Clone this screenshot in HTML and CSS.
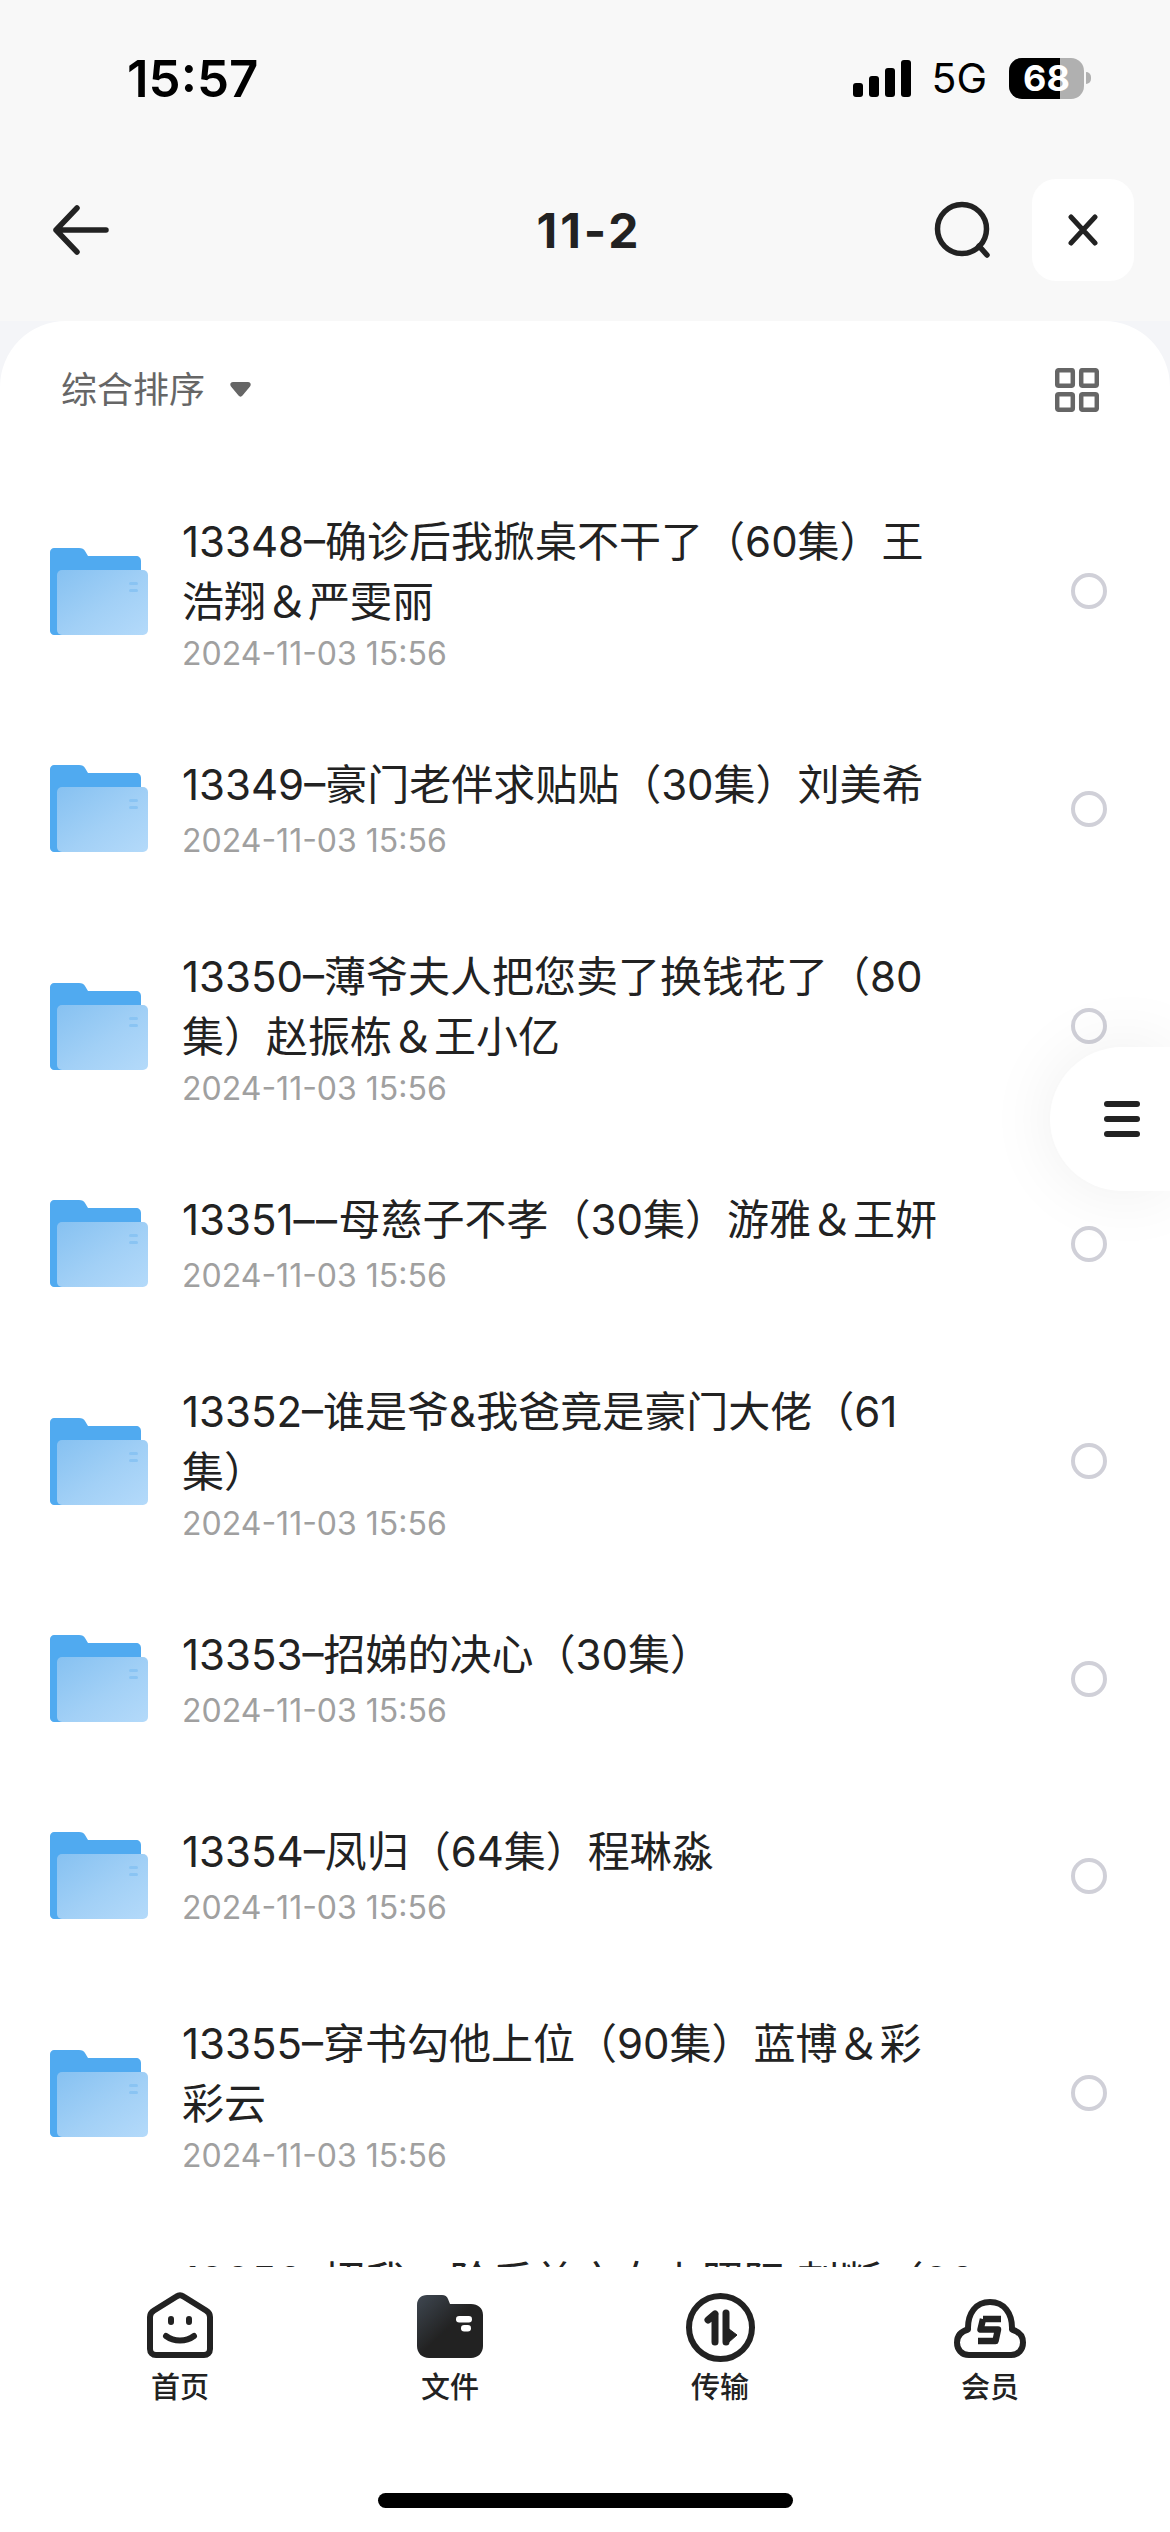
FILE: index.html
```html
<!DOCTYPE html>
<html lang="zh-CN">
<head>
    <meta charset="UTF-8">
    <meta name="viewport" content="width=device-width, initial-scale=1.0">
    <title>11-2</title>
    <link rel="stylesheet" href="styles.css">
</head>
<body>
    <svg class="defs" width="0" height="0">
        <defs>
            <linearGradient id="folderFront" x1="0" y1="0" x2="1" y2="1">
                <stop offset="0" stop-color="#86c1f1"/>
                <stop offset="0.55" stop-color="#a2d0f6"/>
                <stop offset="1" stop-color="#b4dafa"/>
            </linearGradient>
            <linearGradient id="tabFolder" x1="0" y1="0" x2="1" y2="1">
                <stop offset="0" stop-color="#3f4852"/>
                <stop offset="0.5" stop-color="#222222"/>
                <stop offset="1" stop-color="#222222"/>
            </linearGradient>
            <symbol id="folder" viewBox="0 0 98 87">
                <path d="M4 0H29C32 0 34 1 35 3L38 8H86C89 8 91 10 91 13V87H4C2 87 0 85 0 83V4C0 2 2 0 4 0Z" fill="#50aaf0"/>
                <rect x="7" y="22" width="91" height="65" rx="5" fill="url(#folderFront)"/>
                <rect x="79" y="34" width="9" height="3" rx="1.5" fill="#8ac4f3"/>
                <rect x="79" y="41" width="9" height="3" rx="1.5" fill="#8ac4f3"/>
            </symbol>
        </defs>
    </svg>

    <div class="page">
        <header class="top">
            <div class="status-bar">
                <span class="clock">15:57</span>
                <div class="status-right">
                    <svg class="signal" width="58" height="37" viewBox="0 0 58 37">
                        <rect x="0" y="23" width="10" height="14" rx="3"/>
                        <rect x="16" y="16" width="10" height="21" rx="3"/>
                        <rect x="32" y="8" width="10" height="29" rx="3"/>
                        <rect x="48" y="0" width="10" height="37" rx="3"/>
                    </svg>
                    <span class="network">5G</span>
                    <div class="battery">
                        <div class="battery-body"><span class="battery-level"></span><span class="battery-text">68</span></div>
                        <span class="battery-nub"></span>
                    </div>
                </div>
            </div>
            <div class="nav">
                <svg class="back" width="56" height="50" viewBox="0 0 56 50" fill="none" stroke="#222" stroke-width="5.5" stroke-linecap="round" stroke-linejoin="round">
                    <path d="M24 3L3 25L24 47M3 25H53"/>
                </svg>
                <div class="nav-title">11-2</div>
                <svg class="search" width="58" height="58" viewBox="0 0 58 58" fill="none" stroke="#222" stroke-width="5.5" stroke-linecap="round">
                    <circle cx="28" cy="28" r="24.5"/>
                    <path d="M45 45L53 54"/>
                </svg>
                <button class="close">
                    <svg width="30" height="32" viewBox="0 0 30 32" fill="none" stroke="#222" stroke-width="5" stroke-linecap="round">
                        <path d="M3 3L27 29M27 3L3 29"/>
                    </svg>
                </button>
            </div>
        </header>

        <main class="sheet">
            <div class="sort-bar">
                <div class="sort">
                    <span>综合排序</span>
                    <svg width="21" height="15" viewBox="0 0 21 15"><path d="M3 0H18C20.500 0 21.500 2.500 20 4.500L12.500 13.500C11.500 15 9.500 15 8.500 13.500L1 4.500C-.5 2.500 .5 0 3 0Z" fill="#666"/></svg>
                </div>
                <svg class="grid-icon" width="44" height="44" viewBox="0 0 44 44" fill="none" stroke="#666" stroke-width="4.500">
                    <rect x="2.200" y="2.200" width="15.600" height="15.600" rx="1.500"/>
                    <rect x="26.200" y="2.200" width="15.600" height="15.600" rx="1.500"/>
                    <rect x="2.200" y="26.200" width="15.600" height="15.600" rx="1.500"/>
                    <rect x="26.200" y="26.200" width="15.600" height="15.600" rx="1.500"/>
                </svg>
            </div>

            <ul class="file-list">
                <li class="file two-lines">
                    <svg class="folder"><use href="#folder"/></svg>
                    <div class="file-text">
                        <div class="file-name">13348–确诊后我掀桌不干了（60集）王<br>浩翔＆严雯丽</div>
                        <div class="file-date">2024-11-03 15:56</div>
                    </div>
                    <span class="radio"></span>
                </li>
                <li class="file">
                    <svg class="folder"><use href="#folder"/></svg>
                    <div class="file-text">
                        <div class="file-name">13349–豪门老伴求贴贴（30集）刘美希</div>
                        <div class="file-date">2024-11-03 15:56</div>
                    </div>
                    <span class="radio"></span>
                </li>
                <li class="file two-lines">
                    <svg class="folder"><use href="#folder"/></svg>
                    <div class="file-text">
                        <div class="file-name">13350–薄爷夫人把您卖了换钱花了（80<br>集）赵振栋＆王小亿</div>
                        <div class="file-date">2024-11-03 15:56</div>
                    </div>
                    <span class="radio"></span>
                </li>
                <li class="file">
                    <svg class="folder"><use href="#folder"/></svg>
                    <div class="file-text">
                        <div class="file-name">13351<span class="dashes">––</span>母慈子不孝（30集）游雅＆王妍</div>
                        <div class="file-date">2024-11-03 15:56</div>
                    </div>
                    <span class="radio"></span>
                </li>
                <li class="file two-lines">
                    <svg class="folder"><use href="#folder"/></svg>
                    <div class="file-text">
                        <div class="file-name">13352–谁是爷&amp;我爸竟是豪门大佬（61<br>集）</div>
                        <div class="file-date">2024-11-03 15:56</div>
                    </div>
                    <span class="radio"></span>
                </li>
                <li class="file">
                    <svg class="folder"><use href="#folder"/></svg>
                    <div class="file-text">
                        <div class="file-name">13353–招娣的决心（30集）</div>
                        <div class="file-date">2024-11-03 15:56</div>
                    </div>
                    <span class="radio"></span>
                </li>
                <li class="file">
                    <svg class="folder"><use href="#folder"/></svg>
                    <div class="file-text">
                        <div class="file-name">13354–凤归（64集）程琳淼</div>
                        <div class="file-date">2024-11-03 15:56</div>
                    </div>
                    <span class="radio"></span>
                </li>
                <li class="file two-lines">
                    <svg class="folder"><use href="#folder"/></svg>
                    <div class="file-text">
                        <div class="file-name">13355–穿书勾他上位（90集）蓝博＆彩<br>彩云</div>
                        <div class="file-date">2024-11-03 15:56</div>
                    </div>
                    <span class="radio"></span>
                </li>
                <li class="file file-cut">
                    <div class="file-name">13356–招我二阶后首充女上照阳 刺断（30</div>
                </li>
            </ul>

            <button class="side-menu">
                <span></span><span></span><span></span>
            </button>
        </main>

        <nav class="tabbar">
            <div class="tab">
                <div class="tab-icon">
                    <svg width="66" height="66" viewBox="0 0 66 66" fill="none" stroke="#222" stroke-width="6" stroke-linecap="round" stroke-linejoin="round">
                        <path d="M29.500 4.500C31.700 3 34.300 3 36.500 4.500L59 18.500C61.500 20 63 22 63 25V57C63 60.500 60.500 63 57 63H9C5.500 63 3 60.500 3 57V25C3 22 4.500 20 7 18.500Z"/>
                        <path d="M19 44C27 50 39 50 47 44"/>
                        <path d="M24 27V30M42 27V30"/>
                    </svg>
                </div>
                <span>首页</span>
            </div>
            <div class="tab">
                <div class="tab-icon">
                    <svg width="66" height="63" viewBox="0 0 66 63">
                        <path d="M10 0H25C28 0 30 1.500 31 4L33 9H54C61 9 66 13 66 20V51C66 58 61 63 54 63H12C5 63 0 58 0 51V10C0 4 4 0 10 0Z" fill="url(#tabFolder)"/>
                        <rect x="39" y="21" width="16" height="6.500" rx="3.200" fill="#fff"/>
                        <rect x="44" y="30" width="10" height="6.500" rx="3.200" fill="#fff"/>
                    </svg>
                </div>
                <span>文件</span>
            </div>
            <div class="tab">
                <div class="tab-icon">
                    <svg class="transfer" width="69" height="69" viewBox="0 0 69 69" fill="none">
                        <circle cx="34.500" cy="34.500" r="31.500" stroke="#222" stroke-width="6"/>
                        <path d="M29 21V49M29 21L22 27" stroke="#222" stroke-width="7" stroke-linecap="round" stroke-linejoin="round"/>
                        <path d="M40 20V49" stroke="#222" stroke-width="7" stroke-linecap="round"/>
                        <path d="M43 36L51 42L43 49Z" fill="#222" stroke="#222" stroke-width="1" stroke-linejoin="round"/>
                    </svg>
                </div>
                <span>传输</span>
            </div>
            <div class="tab">
                <div class="tab-icon">
                    <svg width="72" height="59" viewBox="0 0 72 59" fill="none">
                        <path d="M15 56C7.500 56 3 50.500 3 43.500C3 37 7 32.500 14 30.500C13.500 14 22 3 36 3C50 3 58.500 14 58 30.500C65 32.500 69 37 69 43.500C69 50.500 64.500 56 57 56Z" stroke="#222" stroke-width="6" stroke-linejoin="round"/>
                        <path d="M29 20H47M29 20L26.500 30.500H44L41.500 42H24" stroke="#222" stroke-width="6.500" stroke-linejoin="round"/>
                    </svg>
                </div>
                <span>会员</span>
            </div>
        </nav>
        <div class="home-bar"><span class="home-indicator"></span></div>
    </div>
</body>
</html>
```

FILE: styles.css
```css
:root {
    --top-bg: #f8f8f8;
    --text-color: #222222;
    --muted: #a0a0a0;
    --grey: #666666;
}

* {
    margin: 0;
    padding: 0;
    box-sizing: border-box;
}

body {
    font-family: Inter, 'Noto Sans CJK SC', sans-serif;
    color: var(--text-color);
    background: #ffffff;
}

.defs {
    position: absolute;
}

.page {
    width: 1170px;
    height: 2532px;
    display: flex;
    flex-direction: column;
    overflow: hidden;
    background: #f4f5f8;
}

.top {
    height: 321px;
    flex: none;
    background: var(--top-bg);
}

.status-bar {
    height: 156px;
    display: flex;
    justify-content: space-between;
    align-items: center;
    padding: 0 79px 0 127px;
}

.clock {
    font-size: 51px;
    font-weight: 600;
    color: #000000;
}

.status-right {
    display: flex;
    align-items: center;
}

.signal {
    fill: #000000;
    margin-right: 20px;
}

.network {
    font-size: 41px;
    color: #000000;
    margin-right: 22px;
}

.battery {
    display: flex;
    align-items: center;
}

.battery-body {
    position: relative;
    width: 75px;
    height: 41px;
    border-radius: 13px;
    background: #b0b0b0;
    overflow: hidden;
    display: flex;
    align-items: center;
    justify-content: center;
}

.battery-level {
    position: absolute;
    left: 0;
    top: 0;
    bottom: 0;
    width: 51px;
    background: #000000;
}

.battery-text {
    position: relative;
    font-size: 36px;
    font-weight: 700;
    color: #ffffff;
}

.battery-nub {
    width: 5px;
    height: 12px;
    margin-left: 2px;
    border-radius: 0 6px 6px 0;
    background: #b0b0b0;
}

.nav {
    position: relative;
    display: flex;
    align-items: center;
    height: 102px;
    margin-top: 23px;
    padding: 0 36px 0 53px;
}

.nav-title {
    position: absolute;
    left: 0;
    right: 0;
    text-align: center;
    font-size: 48px;
    font-weight: 700;
    letter-spacing: 3px;
    padding-left: 8px;
}

.search {
    margin-left: auto;
    margin-right: 40px;
}

.close {
    width: 102px;
    height: 102px;
    border: none;
    border-radius: 24px;
    background: #ffffff;
    display: flex;
    align-items: center;
    justify-content: center;
}

.sheet {
    position: relative;
    flex: 1;
    min-height: 0;
    display: flex;
    flex-direction: column;
    background: #ffffff;
    border-radius: 66px 66px 0 0;
    overflow: hidden;
}

.sort-bar {
    flex: none;
    height: 137px;
    display: flex;
    justify-content: space-between;
    align-items: center;
    padding: 0 71px 0 61px;
}

.sort {
    display: flex;
    align-items: center;
    gap: 25px;
    font-size: 36px;
    color: var(--grey);
}

.sort span {
    padding-bottom: 5px;
}

.file-list {
    list-style: none;
    padding-top: 14px;
}

.file {
    height: 197px;
    display: flex;
    align-items: center;
    padding: 0 63px 0 50px;
}

.two-lines {
    height: 238px;
}

/* last row, only the top of its title shows above the tab bar */
.file-cut {
    height: 55px;
    align-items: flex-start;
    padding: 40px 0 0 182px;
}

.folder {
    width: 98px;
    height: 87px;
    flex: none;
}

.file-text {
    flex: 1;
    min-width: 0;
    margin-left: 34px;
}

.two-lines .file-text {
    padding-top: 6px;
}

.file-name {
    font-size: 42px;
    line-height: 60px;
    white-space: nowrap;
}

.dashes {
    letter-spacing: 1.5px;
}

.file-date {
    margin-top: 4px;
    font-size: 32px;
    line-height: 44px;
    color: var(--muted);
}

.two-lines .file-date {
    margin-top: 0;
}

.radio {
    width: 36px;
    height: 36px;
    flex: none;
    border: 4px solid #d0d0d8;
    border-radius: 50%;
}

.side-menu {
    position: absolute;
    right: 0;
    top: 726px;
    width: 120px;
    height: 144px;
    border: none;
    border-radius: 72px 0 0 72px;
    background: #ffffff;
    box-shadow: 0 0 70px rgba(0, 0, 0, 0.07);
    display: flex;
    flex-direction: column;
    justify-content: center;
    gap: 9px;
    padding-left: 54px;
}

.side-menu span {
    width: 36px;
    height: 6px;
    border-radius: 3px;
    background: var(--text-color);
}

.tabbar {
    flex: none;
    height: 191px;
    padding: 25px 45px 0;
    display: grid;
    grid-template-columns: repeat(4, 1fr);
    background: #ffffff;
}

.tab {
    display: flex;
    flex-direction: column;
    align-items: center;
    font-size: 29px;
    font-weight: 500;
    line-height: 46px;
}

.tab-icon {
    height: 66px;
    margin-bottom: 7px;
    display: flex;
    align-items: flex-end;
}

.transfer {
    margin-bottom: -4px;
}

.home-bar {
    flex: none;
    height: 74px;
    padding-top: 35px;
    background: #ffffff;
    display: flex;
    justify-content: center;
    align-items: flex-start;
}

.home-indicator {
    width: 415px;
    height: 15px;
    border-radius: 8px;
    background: #000000;
}
```
